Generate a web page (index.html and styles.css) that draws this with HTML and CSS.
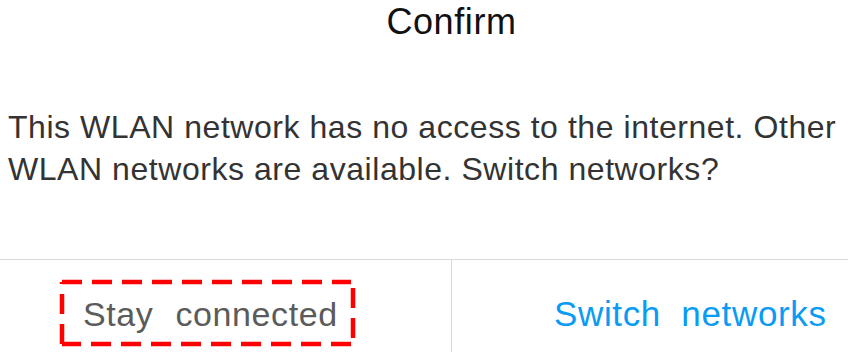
FILE: index.html
```html
<!DOCTYPE html>
<html>
<head>
<meta charset="utf-8">
<link rel="stylesheet" href="styles.css">
</head>
<body>
<div class="dialog">
  <div class="title">Confirm</div>
  <div class="message">This WLAN network has no access to the internet. Other WLAN networks are available. Switch networks?</div>
  <div class="actions">
    <div class="btn btn-stay">
      <span class="stay-box">
        <svg class="dash" width="299" height="68" viewBox="0 0 299 68"><path d="M3 3 H292 M294 9 V64 M292 65 H3 M3 65 V3" fill="none" stroke="#ff0000" stroke-width="4.5" stroke-dasharray="20 10"/></svg>
        <span class="stay-label">Stay connected</span>
      </span>
    </div>
    <div class="btn btn-switch"><span class="switch-label">Switch networks</span></div>
  </div>
</div>
</body>
</html>
```
FILE: styles.css
```css
html, body {
  margin: 0;
  padding: 0;
  background: #ffffff;
}
body {
  width: 848px;
  height: 352px;
  overflow: hidden;
  font-family: "Liberation Sans", Arial, sans-serif;
}
.dialog {
  display: flex;
  flex-direction: column;
  height: 352px;
}
.title {
  text-align: center;
  font-size: 36px;
  line-height: 44px;
  color: #111111;
  letter-spacing: 0.6px;
  padding-left: 55px;
}
.message {
  margin-top: 62px;
  padding-left: 8px;
  font-size: 32px;
  line-height: 42px;
  letter-spacing: 0.55px;
  color: #333333;
  height: 84px;
}
.actions {
  margin-top: 69px;
  border-top: 1px solid #d9d9d9;
  display: flex;
  flex: 1;
}
.btn {
  display: flex;
  align-items: flex-start;
}
.btn-stay {
  width: 452px;
  border-right: 1px solid #d9d9d9;
  padding-left: 59px;
  padding-top: 19px;
  box-sizing: border-box;
}
.stay-box {
  position: relative;
  display: block;
  width: 299px;
  height: 68px;
}
.dash {
  position: absolute;
  left: 0;
  top: 0;
}
.stay-label {
  display: block;
  padding-left: 24px;
  padding-top: 15px;
  font-size: 34px;
  line-height: 40px;
  letter-spacing: 0.6px;
  word-spacing: 12px;
  color: #5b5b5b;
}
.btn-switch {
  flex: 1;
  padding-left: 102px;
  padding-top: 34px;
}
.switch-label {
  font-size: 35px;
  line-height: 40px;
  letter-spacing: 0.65px;
  word-spacing: 10px;
  color: #0a9bf4;
}
```
